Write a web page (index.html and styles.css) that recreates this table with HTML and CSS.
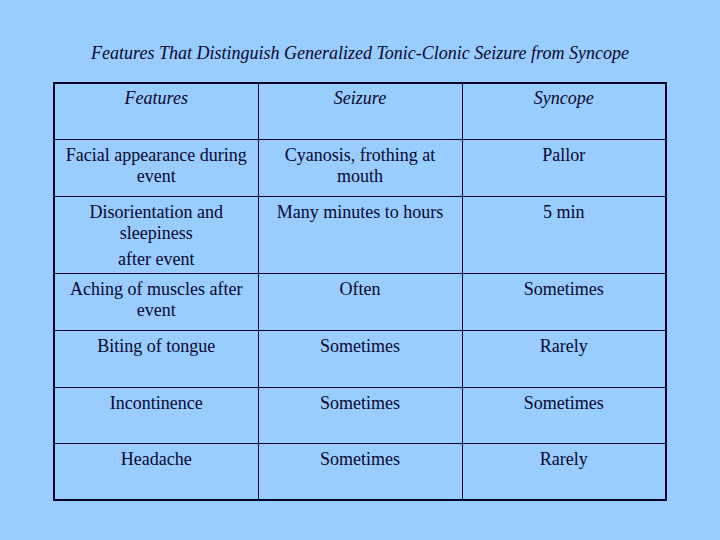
FILE: index.html
```html
<!DOCTYPE html>
<html>
<head>
<meta charset="utf-8">
<link rel="stylesheet" href="styles.css">
</head>
<body>
<div class="slide">
  <h1 class="title">Features That Distinguish Generalized Tonic-Clonic Seizure from Syncope</h1>
  <table class="grid">
    <tr class="head r56">
      <th>Features</th><th>Seizure</th><th>Syncope</th>
    </tr>
    <tr class="r57">
      <td>Facial appearance during event</td><td>Cyanosis, frothing at mouth</td><td>Pallor</td>
    </tr>
    <tr class="r77">
      <td>Disorientation and<br>sleepiness<span class="para">after event</span></td><td>Many minutes to hours</td><td>5 min</td>
    </tr>
    <tr class="r57">
      <td>Aching of muscles after event</td><td>Often</td><td>Sometimes</td>
    </tr>
    <tr class="r57">
      <td>Biting of tongue</td><td>Sometimes</td><td>Rarely</td>
    </tr>
    <tr class="r56">
      <td>Incontinence</td><td>Sometimes</td><td>Sometimes</td>
    </tr>
    <tr class="r57">
      <td>Headache</td><td>Sometimes</td><td>Rarely</td>
    </tr>
  </table>
</div>
</body>
</html>
```
FILE: styles.css
```css
html, body {
  margin: 0;
  padding: 0;
}
body {
  background: #99ccff;
  width: 720px;
  height: 540px;
  overflow: hidden;
  font-family: "Liberation Serif", "Times New Roman", Times, serif;
  color: #080830;
}
.slide {
  display: flex;
  flex-direction: column;
  align-items: center;
  padding-top: 43px;
}
.title {
  margin: 0;
  font-family: "Liberation Serif", "Times New Roman", Times, serif;
  font-size: 18px;
  line-height: 21px;
  font-weight: normal;
  font-style: italic;
  height: 39px;
}
.grid {
  border-collapse: collapse;
  border: 2px solid #000028;
  width: 612px;
  table-layout: fixed;
}
.grid th, .grid td {
  box-sizing: border-box;
  border: 1px solid #000028;
  width: 204px;
  padding: 5px 4px 0;
  vertical-align: top;
  text-align: center;
  font-family: "Liberation Serif", "Times New Roman", Times, serif;
  font-size: 18px;
  line-height: 21px;
  font-weight: normal;
}
.grid th {
  font-style: italic;
  padding-top: 4px;
}
.r56 th, .r56 td { height: 56px; }
.r57 th, .r57 td { height: 57px; }
.r77 th, .r77 td { height: 77px; }
.para {
  display: block;
  margin-top: 5px;
}
```
